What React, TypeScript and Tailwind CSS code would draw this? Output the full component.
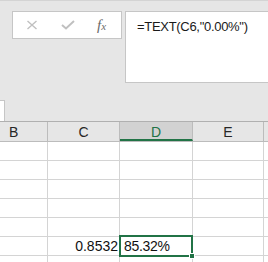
import React from 'react';

const rows = [1, 2, 3, 4, 5, 6, 7];

function HeaderCell({ label, width, active, className = '' }: { label: string; width: string; active?: boolean; className?: string }) {
  return (
    <div
      className={`${width} h-[19px] shrink-0 border-r border-[#bcbcbc] flex items-start justify-center pt-[2px] text-[14px] leading-[16px] ${
        active ? 'bg-[#d2d2d2] text-[#217346] border-b-2 border-b-[#217346]' : 'text-[#262626]'
      } ${className}`}
    >
      {label}
    </div>
  );
}

export default function App() {
  return (
    <div
      className="w-[268px] h-[262px] overflow-hidden bg-[#e6e6e6] border-t border-[#d4d4d4] relative"
      style={{ fontFamily: '"Liberation Sans", Arial, sans-serif' }}
    >
      {/* formula bar */}
      <div className="flex items-start pt-[10px] pl-[12px] gap-[3px]">
        <div className="w-[110px] h-[28px] bg-white border border-[#c6c6c6] flex items-center shrink-0">
          <svg className="ml-[13px]" width="12" height="10" viewBox="0 0 12 10">
            <path d="M1.5 1 L10.5 9 M10.5 1 L1.5 9" stroke="#c0c0c0" strokeWidth="1.4" fill="none" />
          </svg>
          <svg className="ml-[23px]" width="14" height="10" viewBox="0 0 14 10">
            <path d="M1 5 L5 8.5 L13 1" stroke="#c0c0c0" strokeWidth="2" fill="none" />
          </svg>
          <span
            className="ml-[22px] text-[#6a6a6a] italic text-[15px] leading-none"
            style={{ fontFamily: '"Liberation Serif", "Times New Roman", serif' }}
          >
            f<span className="text-[11px]">x</span>
          </span>
        </div>
        <div className="flex-1 h-[72px] bg-white border border-[#c6c6c6] border-r-0 pl-[11px] pt-[5px] text-[13px] tracking-[-0.3px] text-[#1a1a1a] whitespace-nowrap">
          =TEXT(C6,"0.00%")
        </div>
      </div>

      {/* name box fragment */}
      <div className="mt-[17px] w-[5px] h-[21px] bg-white border-t border-r border-[#c6c6c6]" />

      {/* grid */}
      <div className="border-t border-[#b0b0b0]">
        <div className="flex border-b border-[#bcbcbc] bg-[#e6e6e6]">
          <div className="w-[48px] h-[19px] shrink-0 border-r border-[#bcbcbc] pl-[9px] pt-[2px] text-[14px] leading-[16px] text-[#262626]">B</div>
          <HeaderCell label="C" width="w-[72px]" />
          <HeaderCell label="D" width="w-[73px]" active />
          <HeaderCell label="E" width="w-[71px]" />
          <div className="flex-1 h-[19px]" />
        </div>
        {rows.map((r) => (
          <div key={r} className="flex bg-white border-b border-[#d4d4d4] h-[19px]">
            <div className="w-[48px] shrink-0 border-r border-[#d4d4d4]" />
            <div className="w-[72px] shrink-0 border-r border-[#d4d4d4] text-right pr-[1px] text-[14px] leading-[18px] text-[#111]">
              {r === 6 ? '0.8532' : ''}
            </div>
            <div className="w-[73px] shrink-0 border-r border-[#d4d4d4] pl-[4px] text-[14px] leading-[18px] tracking-[-0.3px] text-[#111]">
              {r === 6 ? '85.32%' : ''}
            </div>
            <div className="w-[71px] shrink-0 border-r border-[#d4d4d4]" />
            <div className="flex-1" />
          </div>
        ))}
      </div>

      {/* selection */}
      <div className="absolute left-[119px] top-[234px] w-[74px] h-[22px] border-2 border-[#217346] pointer-events-none" />
      <div className="absolute left-[189px] top-[252px] w-[6px] h-[6px] bg-[#217346] border border-white pointer-events-none" />
    </div>
  );
}
